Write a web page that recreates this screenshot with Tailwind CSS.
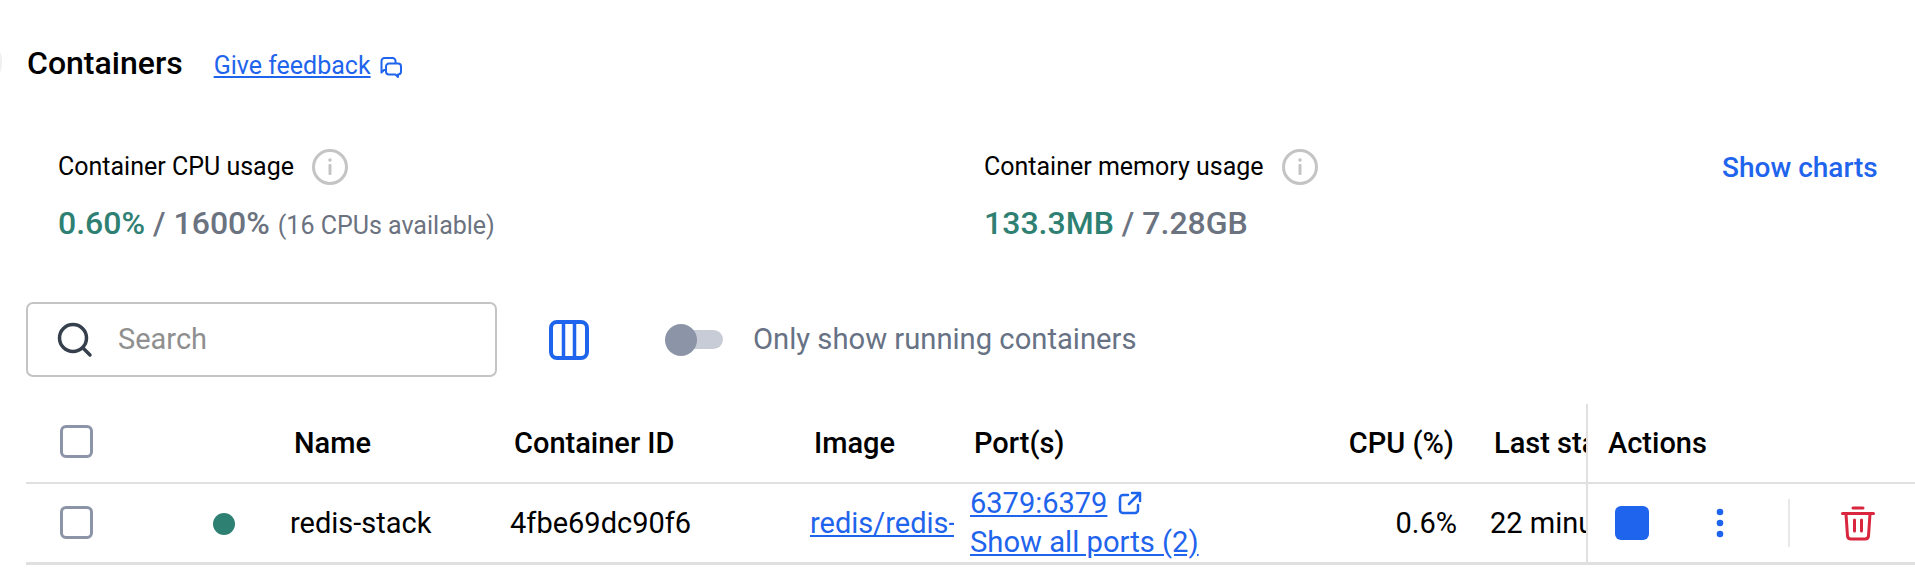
<!DOCTYPE html>
<html>
<head>
<meta charset="utf-8">
<script src="https://cdn.jsdelivr.net/npm/@tailwindcss/browser@4"></script>
</head>
<body class="bg-white font-['Roboto',sans-serif] overflow-hidden">
<div class="relative h-[574px] w-[1915px] overflow-hidden pt-[42px]">
  <div class="absolute left-[-34px] top-[42px] h-[40px] w-[36px] rounded-full bg-[#f0f0f0]"></div>

  <header class="ml-[27px] flex h-[42px] items-center">
    <h1 class="text-[32px] leading-[42px] font-medium text-black">Containers</h1>
    <a class="ml-[31px] mt-[6px] text-[25px] leading-[30px] text-[#1f64ec] underline">Give feedback</a>
    <svg class="ml-[9px] mt-[8px]" width="22" height="21" viewBox="0 0 22 21" fill="none" stroke="#1f64ec" stroke-width="2" stroke-linejoin="round" stroke-linecap="round">
      <path d="M5 13H4L1.500 15.500V4a3 3 0 0 1 3-3h8a3 3 0 0 1 3 3v2"/>
      <path d="M9 6.500h9a3 3 0 0 1 3 3v5a3 3 0 0 1-3 3v2.500L15.500 17.500H9a3 3 0 0 1-3-3v-5a3 3 0 0 1 3-3z"/>
    </svg>
  </header>

  <section class="mt-[65px] flex h-[100px]">
    <div class="ml-[58px] w-[926px]">
      <div class="flex h-[36px] items-center">
        <span class="text-[25px] text-black">Container CPU usage</span>
        <svg class="ml-[18px]" width="36" height="36" viewBox="0 0 36 36" fill="none"><circle cx="18" cy="18" r="16.500" stroke="#c4c4c4" stroke-width="3"/><circle cx="18" cy="11" r="1.800" fill="#c4c4c4"/><rect x="16.500" y="15" width="3" height="11" rx="1" fill="#c4c4c4"/></svg>
      </div>
      <div class="mt-[20px] flex h-[36px] items-baseline leading-[36px] text-[#6b7280]">
        <span class="text-[32px] font-medium text-[#2e8072]">0.60%</span>
        <span class="ml-[8px] text-[32px] font-medium">/</span>
        <span class="ml-[8px] text-[32px] font-medium">1600%</span>
        <span class="ml-[8px] text-[25px]">(16 CPUs available)</span>
      </div>
    </div>
    <div class="w-[738px]">
      <div class="flex h-[36px] items-center">
        <span class="text-[25px] text-black">Container memory usage</span>
        <svg class="ml-[18px]" width="36" height="36" viewBox="0 0 36 36" fill="none"><circle cx="18" cy="18" r="16.500" stroke="#c4c4c4" stroke-width="3"/><circle cx="18" cy="11" r="1.800" fill="#c4c4c4"/><rect x="16.500" y="15" width="3" height="11" rx="1" fill="#c4c4c4"/></svg>
      </div>
      <div class="mt-[20px] flex h-[36px] items-baseline leading-[36px] text-[#6b7280]">
        <span class="text-[32px] font-medium text-[#2e8072]">133.3MB</span>
        <span class="ml-[8px] text-[32px] font-medium">/</span>
        <span class="ml-[8px] text-[32px] font-medium">7.28GB</span>
      </div>
    </div>
    <a class="mt-[1px] h-[36px] text-[28px] leading-[36px] font-medium text-[#1f64ec]">Show charts</a>
  </section>

  <section class="ml-[26px] mt-[53px] flex h-[75px] items-center">
    <div class="flex h-[75px] w-[471px] items-center rounded-[7px] border-2 border-[#c4c4c4] pl-[29px]">
      <svg width="36" height="36" viewBox="0 0 36 36" fill="none" stroke="#36404d" stroke-width="3.500" stroke-linecap="round"><circle cx="16" cy="16" r="13.500"/><path d="M26 26l7 7"/></svg>
      <span class="ml-[25px] text-[29px] text-[#8f8f8f]">Search</span>
    </div>
    <svg class="ml-[52px]" width="40" height="40" viewBox="0 0 40 40" fill="none" stroke="#1f64ec" stroke-width="4"><rect x="2" y="2" width="36" height="36" rx="6"/><path d="M14.500 2v36M25.500 2v36" stroke-width="3.500"/></svg>
    <div class="relative ml-[76px] h-[29px] w-[58px]">
      <div class="ml-[2px] mt-[5px] h-[19px] w-[56px] rounded-full bg-[#c7ccd6]"></div>
      <div class="absolute left-0 top-[-1px] size-[32px] rounded-full bg-[#8c94a8]"></div>
    </div>
    <span class="ml-[30px] text-[29.2px] text-[#677285]">Only show running containers</span>
  </section>

  <section class="ml-[26px] mt-[27px] flex h-[161px] items-stretch">
    <div class="w-[1560px] shrink-0 overflow-hidden text-[29px] leading-[38px] text-black">
      <div class="grid h-[80px] grid-cols-[153px_107px_220px_300px_160px_334px_187px_99px] items-center border-b-2 border-[#e0e0e0] font-medium">
        <div class="pl-[34px]"><div class="mb-[3px] size-[33px] rounded-[6px] border-[3px] border-[#8c94a8]"></div></div>
        <div></div>
        <div class="pl-[8px]">Name</div>
        <div class="pl-[8px]">Container ID</div>
        <div class="pl-[8px]">Image</div>
        <div class="pl-[8px]">Port(s)</div>
        <div class="pr-[33px] text-right">CPU (%)</div>
        <div class="overflow-hidden whitespace-nowrap pl-[7px]">Last started</div>
      </div>
      <div class="grid h-[81px] grid-cols-[153px_107px_220px_300px_160px_334px_187px_99px] items-center border-b-[3px] border-[#e0e0e0]">
        <div class="pl-[34px]"><div class="mb-[3px] size-[33px] rounded-[6px] border-[3px] border-[#8c94a8]"></div></div>
        <div class="pl-[34px]"><div class="mb-[1px] size-[22px] rounded-full bg-[#2e8072]"></div></div>
        <div class="pb-[2px] pl-[4px]">redis-stack</div>
        <div class="pb-[2px] pl-[4px]">4fbe69dc90f6</div>
        <div class="pb-[2px] pl-[4px]"><a class="block w-[144px] overflow-hidden whitespace-nowrap text-[#1f64ec] underline">redis/redis-stack</a></div>
        <div class="pb-[2px] pl-[4px] text-[#1f64ec]">
          <div class="flex h-[38px] items-center"><a class="underline">6379:6379</a>
            <svg class="ml-[11px]" width="24" height="24" viewBox="0 0 24 24" fill="none" stroke="#1f64ec" stroke-width="2.500" stroke-linecap="round" stroke-linejoin="round"><path d="M10 4H5a3 3 0 0 0-3 3v12a3 3 0 0 0 3 3h12a3 3 0 0 0 3-3v-5"/><path d="M14 2h8v8M22 2L11 13"/></svg>
          </div>
          <div class="flex h-[40px] items-center"><a class="text-[29.2px] underline">Show all ports (2)</a></div>
        </div>
        <div class="pb-[2px] pr-[30px] text-right">0.6%</div>
        <div class="overflow-hidden whitespace-nowrap pb-[2px] pl-[3px]">22 minutes ago</div>
      </div>
    </div>
    <div class="min-w-0 flex-1 text-[29px] text-black">
      <div class="h-[80px] border-b-2 border-l-2 border-[#e0e0e0] pl-[20px] font-medium leading-[78px]">Actions</div>
      <div class="flex h-[81px] items-center border-b-[3px] border-[#e0e0e0]">
        <div class="h-full w-[2px] bg-[#e0e0e0]"></div>
        <div class="ml-[27px] size-[34px] rounded-[6px] bg-[#1f64ec]"></div>
        <svg class="ml-[67px]" width="8" height="30" viewBox="0 0 8 30" fill="#1f64ec"><circle cx="4" cy="4" r="3.300"/><circle cx="4" cy="15" r="3.300"/><circle cx="4" cy="26" r="3.300"/></svg>
        <div class="ml-[64px] h-[48px] w-[2px] bg-[#e8e8e8]"></div>
        <svg class="ml-[51px]" width="34" height="35" viewBox="0 0 34 35" fill="none" stroke="#d9263e" stroke-width="3" stroke-linecap="round" stroke-linejoin="round"><path d="M12 2h10"/><path d="M1.500 7.500h31"/><path d="M5 8l1.500 22a3.500 3.500 0 0 0 3.500 3h14a3.500 3.500 0 0 0 3.500-3L29 8"/><path d="M13.500 14v11M20.500 14v11"/></svg>
      </div>
    </div>
  </section>
</div>
</body>
</html>
